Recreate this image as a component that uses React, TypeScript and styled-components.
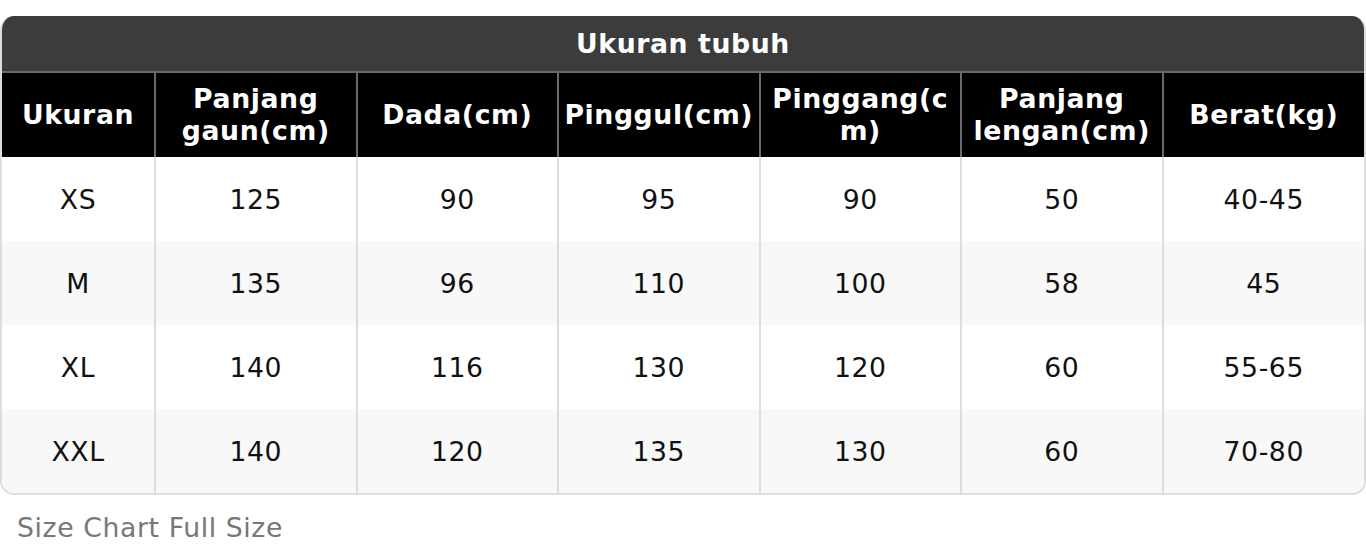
import React, { FC } from "react"
import styled, { createGlobalStyle } from "styled-components"

// data
const HEADERS = [
  "Ukuran",
  "Panjang gaun(cm)",
  "Dada(cm)",
  "Pinggul(cm)",
  "Pinggang(cm)",
  "Panjang lengan(cm)",
  "Berat(kg)",
]

const ROWS = [
  ["XS", "125", "90", "95", "90", "50", "40-45"],
  ["M", "135", "96", "110", "100", "58", "45"],
  ["XL", "140", "116", "130", "120", "60", "55-65"],
  ["XXL", "140", "120", "135", "130", "60", "70-80"],
]

const FONT_SIZE = 26.7
const ROW_HEIGHT = 84

const GlobalStyle = createGlobalStyle`
  body {
    margin: 0;
    background: #ffffff;
    font-family: "DejaVu Sans", "Noto Sans", sans-serif;
    letter-spacing: 0.6px;
  }
`

const App: FC = () => (
  <>
    <GlobalStyle />
    <Page>
      <TableCard>
        <Title>Ukuran tubuh</Title>
        <Table>
          <colgroup>
            <col style={{ width: 153 }} />
            {HEADERS.slice(1).map((h) => (
              <col key={h} />
            ))}
          </colgroup>
          <thead>
            <tr>
              {HEADERS.map((h) => (
                <HeadCell key={h}>{h}</HeadCell>
              ))}
            </tr>
          </thead>
          <tbody>
            {ROWS.map((row, i) => (
              <BodyRow key={row[0]} $striped={i % 2 === 1}>
                {row.map((v, j) => (
                  <BodyCell key={j}>{v}</BodyCell>
                ))}
              </BodyRow>
            ))}
          </tbody>
        </Table>
      </TableCard>
      <Caption>Size Chart Full Size</Caption>
    </Page>
  </>
)

export default App

const Page = styled.div`
  padding-top: 16px;
`

const TableCard = styled.div`
  border: 2px solid #dddddd;
  border-top: none;
  border-radius: 14px;
  overflow: hidden;
  margin: 0;
`

const Title = styled.div`
  background: #3c3c3c;
  color: #ffffff;
  font-weight: bold;
  font-size: ${FONT_SIZE}px;
  height: 55px;
  line-height: 55px;
  text-align: center;
  border-bottom: 2px solid #6a6a6a;
  margin: 0 -2px;
`

const Table = styled.table`
  width: 100%;
  border-collapse: collapse;
  table-layout: fixed;
  font-size: ${FONT_SIZE}px;
`

const HeadCell = styled.th`
  background: #000000;
  color: #ffffff;
  font-weight: bold;
  height: ${ROW_HEIGHT}px;
  line-height: 32px;
  padding: 0 4px;
  text-align: center;
  vertical-align: middle;
  overflow-wrap: anywhere;
  border-left: 2px solid #6a6a6a;
  &:first-child {
    border-left: none;
  }
`

const BodyRow = styled.tr<{ $striped: boolean }>`
  background: ${(p) => (p.$striped ? "#f8f8f8" : "#ffffff")};
`

const BodyCell = styled.td`
  color: #111111;
  height: ${ROW_HEIGHT}px;
  padding: 0;
  text-align: center;
  vertical-align: middle;
  border-left: 2px solid #dddddd;
  &:first-child {
    border-left: none;
  }
`

const Caption = styled.div`
  color: #777777;
  font-size: ${FONT_SIZE}px;
  padding: 17px 17px 0;
`
